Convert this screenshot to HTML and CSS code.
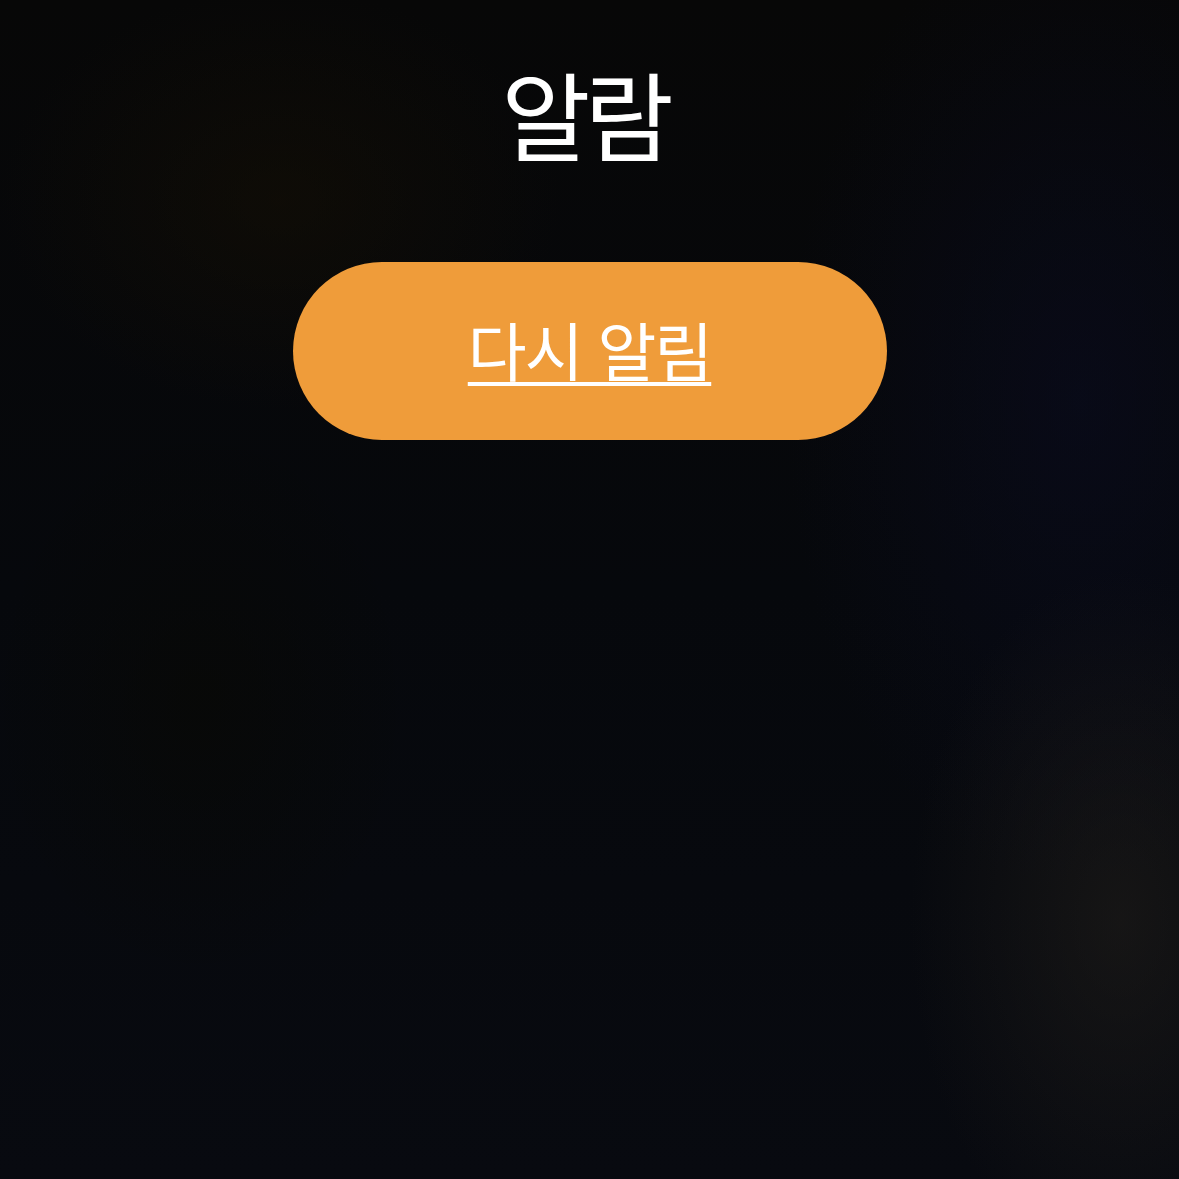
FILE: index.html
```html
<!DOCTYPE html>
<html lang="ko">
<head>
<meta charset="utf-8">
<link rel="stylesheet" href="styles.css">
</head>
<body>
<main class="screen">
  <h1 class="title">알람</h1>
  <button class="snooze"><span class="snooze-label">다시 알림</span></button>
</main>
</body>
</html>
```
FILE: styles.css
```css
html, body {
  margin: 0;
  padding: 0;
  width: 1179px;
  height: 1179px;
  overflow: hidden;
}
body {
  background-color: #07080c;
  background-image:
    radial-gradient(ellipse 300px 500px at 1120px 920px, rgba(40,36,30,0.45), transparent 70%),
    radial-gradient(ellipse 400px 300px at 280px 200px, rgba(22,16,4,0.5), transparent 70%),
    radial-gradient(ellipse 420px 700px at 1080px 400px, rgba(10,12,32,0.6), transparent 70%),
    radial-gradient(ellipse 300px 400px at 200px 700px, rgba(8,8,4,0.6), transparent 70%),
    linear-gradient(180deg, #070707 0%, #06080c 50%, #080a10 100%);
  font-family: "Noto Sans CJK KR", "Noto Sans", sans-serif;
}
.screen {
  display: flex;
  flex-direction: column;
  align-items: center;
  padding-top: 63px;
}
.title {
  margin: 0 10px 0 0;
  font-size: 97px;
  font-weight: 400;
  line-height: 1;
  color: #ffffff;
  letter-spacing: -6px;
}
.snooze {
  margin-top: 102px;
  width: 594px;
  height: 178px;
  border: none;
  border-radius: 89px;
  background: #ef9c3a;
  display: flex;
  align-items: center;
  justify-content: center;
  padding: 0 0 6px 0;
  font-family: inherit;
}
.snooze-label {
  font-size: 64px;
  line-height: 1;
  color: #ffffff;
  text-decoration: underline;
  text-decoration-thickness: 4px;
  text-underline-offset: 6px;
  letter-spacing: -2px;
}
```
